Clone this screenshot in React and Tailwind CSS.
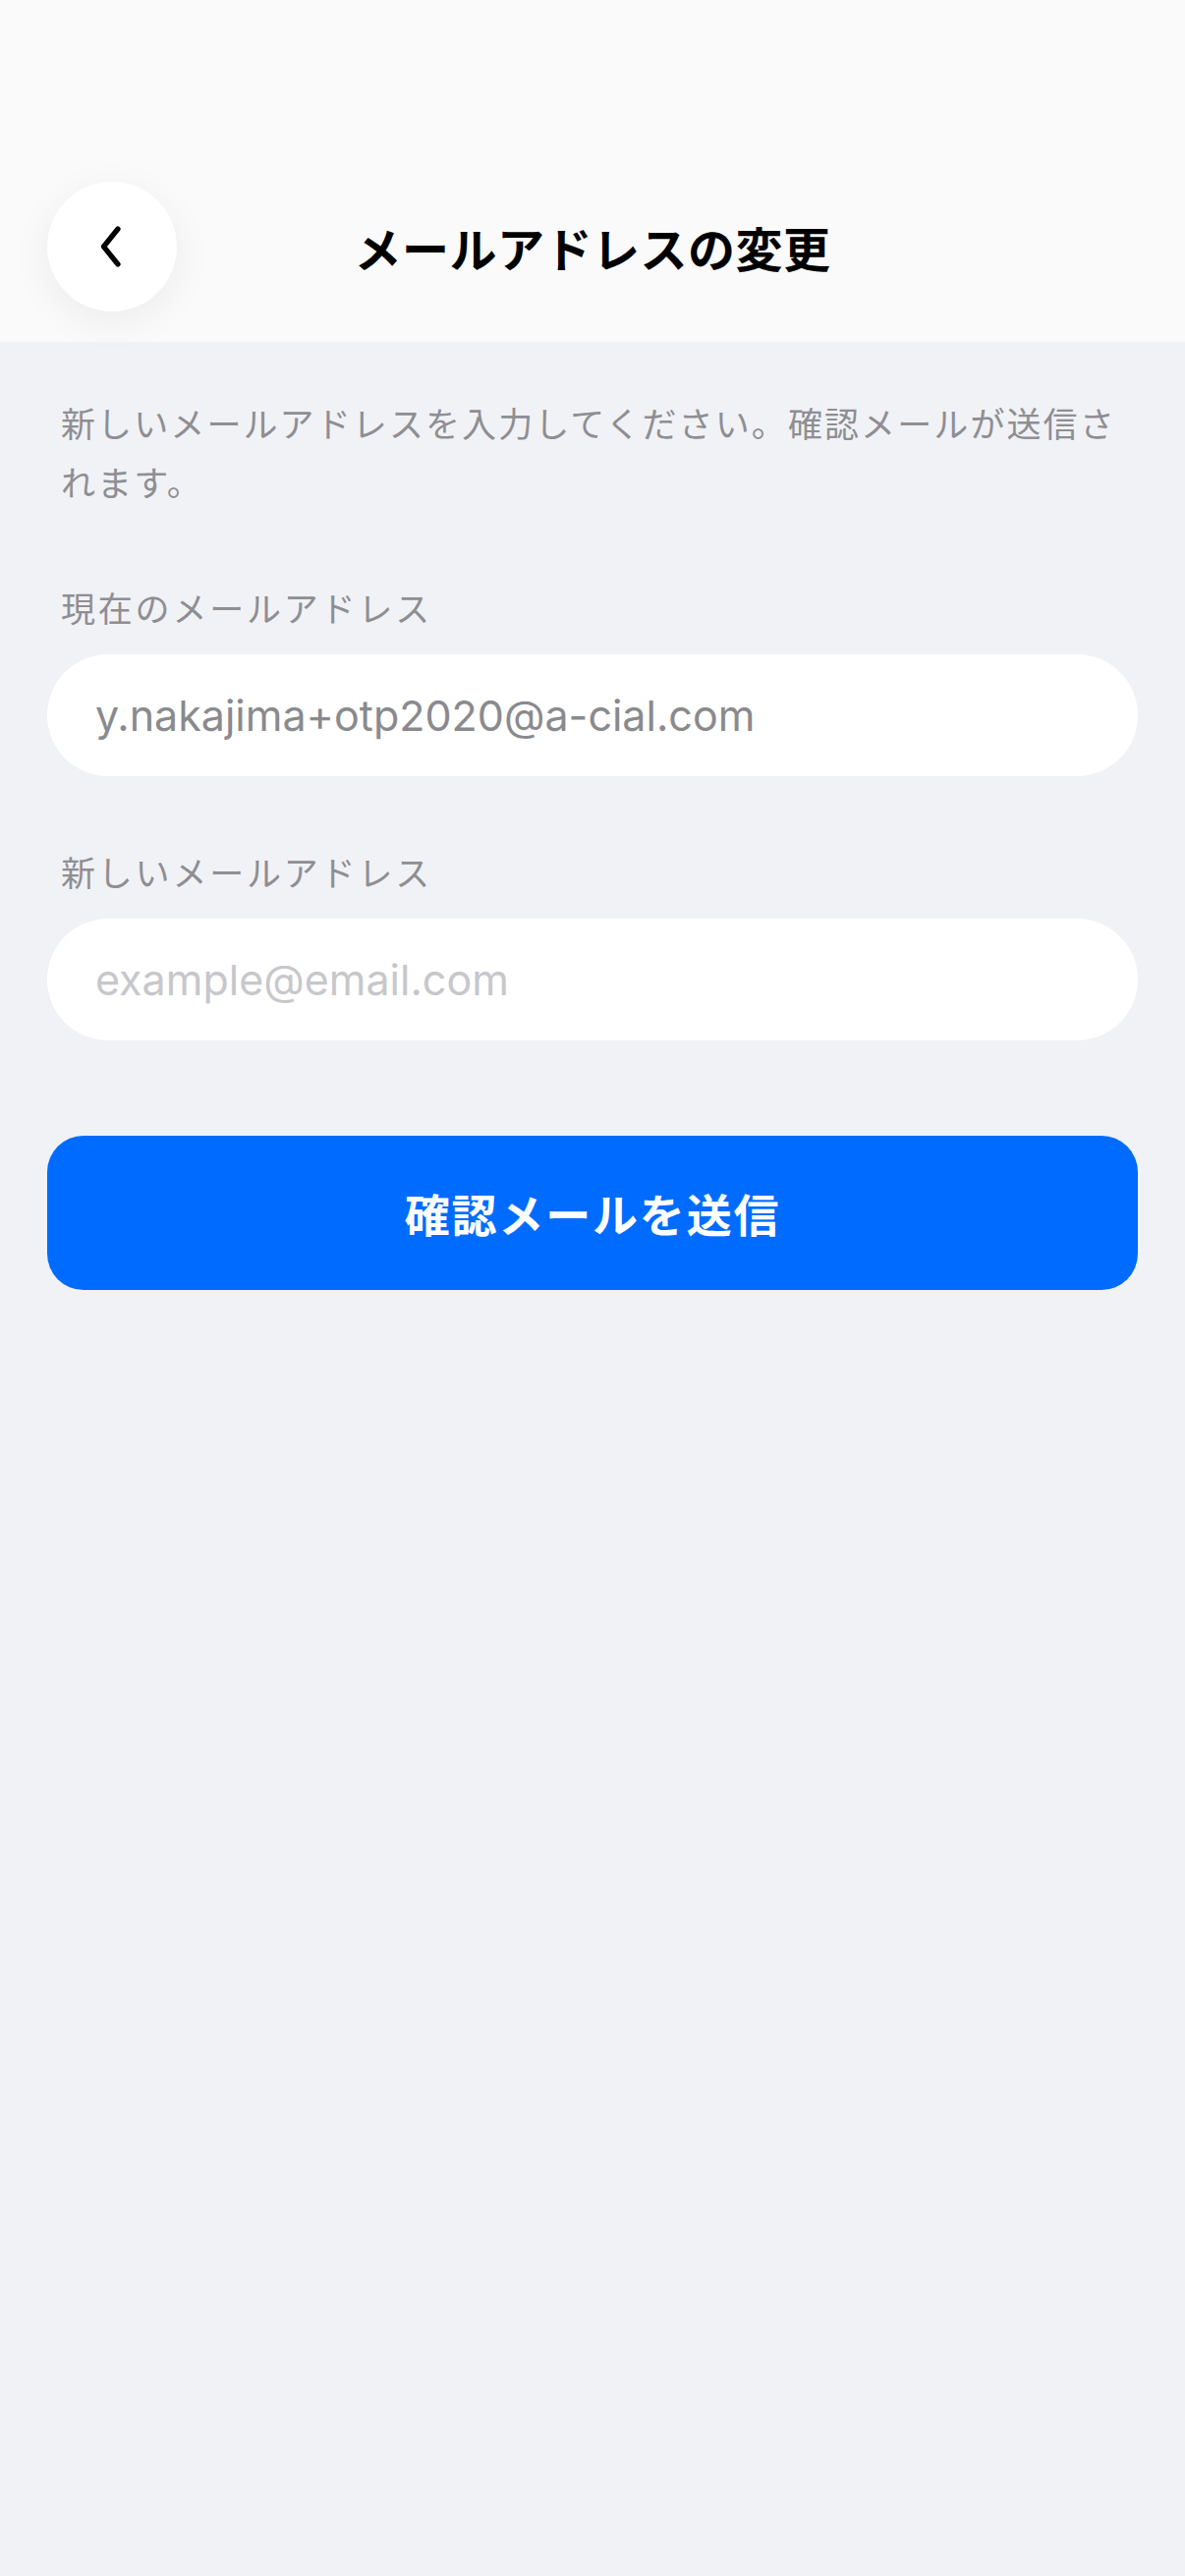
import React, { useState } from 'react';

const font = { fontFamily: '"Noto Sans CJK JP", "Noto Sans", Inter, sans-serif' };
const latin = { fontFamily: 'Inter, "Noto Sans", sans-serif' };

const BackIcon = () => (
  <svg width="60" height="60" viewBox="0 0 24 24" fill="none" stroke="#000" strokeWidth="2.1" strokeLinecap="round" strokeLinejoin="round">
    <path d="M14.4 4.8 L8.6 12 L14.4 19.2" />
  </svg>
);

const App = () => {
  const [newEmail, setNewEmail] = useState('');

  return (
    <div className="min-h-screen bg-[#f1f2f6] flex flex-col" style={font}>
      {/* HEADER */}
      <header className="h-[348px] bg-[#fafafa] flex items-end px-12 pb-[31px] relative">
        <div className="w-full h-[132px] flex items-center relative">
          <button className="w-[132px] h-[132px] rounded-full bg-white flex items-center justify-center shadow-[0_10px_40px_rgba(0,0,0,0.06)] z-10">
            <BackIcon />
          </button>
          <h1 className="absolute inset-0 flex items-center justify-center text-[48px] font-bold text-black tracking-[0.01em]">
            メールアドレスの変更
          </h1>
        </div>
      </header>

      {/* CONTENT */}
      <main className="px-12 pt-[52px] flex flex-col">
        <p className="pl-[14px] pr-[10px] text-[35px] leading-[60px] text-[#8e8e93] tracking-[0.06em]">
          新しいメールアドレスを入力してください。確認メールが送信されます。
        </p>

        <label className="mt-[74px] px-[14px] text-[35px] leading-[48px] text-[#8e8e93] tracking-[0.08em]">
          現在のメールアドレス
        </label>
        <div className="mt-[24px] h-[124px] rounded-full bg-white flex items-center px-[49px]">
          <span className="text-[43px] text-[#8a8a8e]" style={latin}>
            y.nakajima+otp2020@a-cial.com
          </span>
        </div>

        <label className="mt-[73px] px-[14px] text-[35px] leading-[48px] text-[#8e8e93] tracking-[0.08em]">
          新しいメールアドレス
        </label>
        <input
          value={newEmail}
          onChange={e => setNewEmail(e.target.value)}
          placeholder="example@email.com"
          className="mt-[24px] h-[124px] rounded-full bg-white px-[49px] text-[43px] text-black placeholder:text-[#c7c7cc] outline-none"
          style={latin}
        />

        <button className="mt-[97px] h-[157px] rounded-[37px] bg-[#006cff] text-white text-[46px] font-bold tracking-[0.04em]">
          確認メールを送信
        </button>
      </main>
    </div>
  );
};

export default App;
